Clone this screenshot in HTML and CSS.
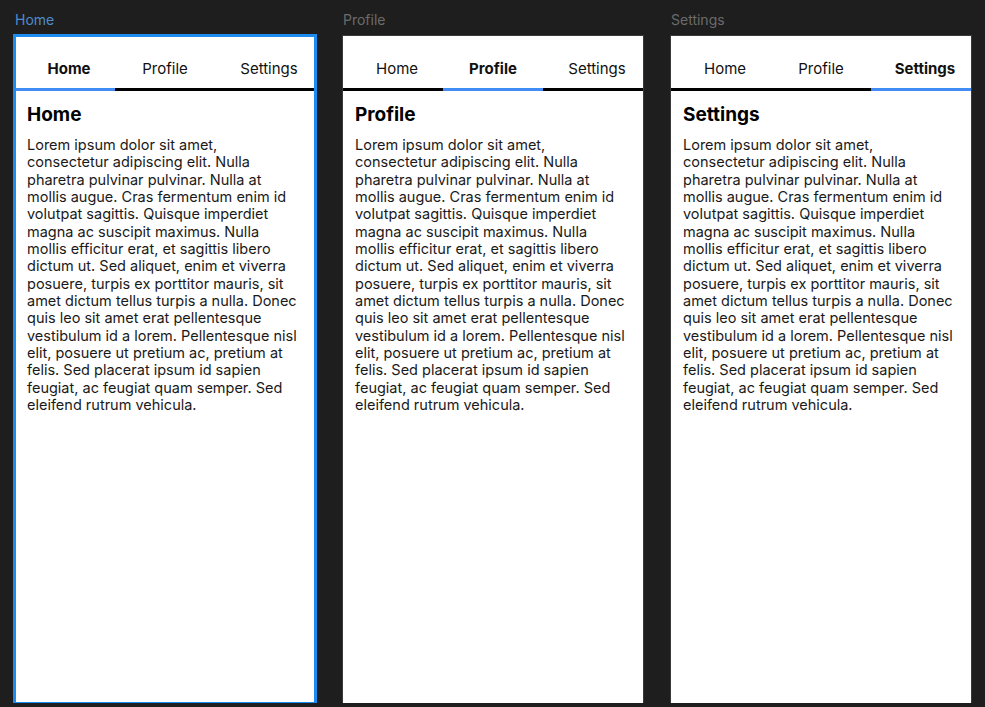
FILE: index.html
```html
<!DOCTYPE html>
<html>
<head>
    <title>Tabs</title>
    <link rel="stylesheet" href="styles.css">
</head>
<body>
    <div class="canvas">
        <div class="column">
            <div class="frame-label selected">Home</div>
            <div class="frame selected">
                <div class="tabs">
                    <div class="tab active">Home</div>
                    <div class="tab">Profile</div>
                    <div class="tab">Settings</div>
                </div>
                <div class="content">
                    <h2>Home</h2>
                    <p>Lorem ipsum dolor sit amet, consectetur adipiscing elit. Nulla pharetra pulvinar pulvinar. Nulla at mollis augue. Cras fermentum enim id volutpat sagittis. Quisque imperdiet magna ac suscipit maximus. Nulla mollis efficitur erat, et sagittis libero dictum ut. Sed aliquet, enim et viverra posuere, turpis ex porttitor mauris, sit amet dictum tellus turpis a nulla. Donec quis leo sit amet erat pellentesque vestibulum id a lorem. Pellentesque nisl elit, posuere ut pretium ac, pretium at felis. Sed placerat ipsum id sapien feugiat, ac feugiat quam semper. Sed eleifend rutrum vehicula.</p>
                </div>
            </div>
        </div>
        <div class="column">
            <div class="frame-label">Profile</div>
            <div class="frame">
                <div class="tabs">
                    <div class="tab">Home</div>
                    <div class="tab active">Profile</div>
                    <div class="tab">Settings</div>
                </div>
                <div class="content">
                    <h2>Profile</h2>
                    <p>Lorem ipsum dolor sit amet, consectetur adipiscing elit. Nulla pharetra pulvinar pulvinar. Nulla at mollis augue. Cras fermentum enim id volutpat sagittis. Quisque imperdiet magna ac suscipit maximus. Nulla mollis efficitur erat, et sagittis libero dictum ut. Sed aliquet, enim et viverra posuere, turpis ex porttitor mauris, sit amet dictum tellus turpis a nulla. Donec quis leo sit amet erat pellentesque vestibulum id a lorem. Pellentesque nisl elit, posuere ut pretium ac, pretium at felis. Sed placerat ipsum id sapien feugiat, ac feugiat quam semper. Sed eleifend rutrum vehicula.</p>
                </div>
            </div>
        </div>
        <div class="column">
            <div class="frame-label">Settings</div>
            <div class="frame">
                <div class="tabs">
                    <div class="tab">Home</div>
                    <div class="tab">Profile</div>
                    <div class="tab active">Settings</div>
                </div>
                <div class="content">
                    <h2>Settings</h2>
                    <p>Lorem ipsum dolor sit amet, consectetur adipiscing elit. Nulla pharetra pulvinar pulvinar. Nulla at mollis augue. Cras fermentum enim id volutpat sagittis. Quisque imperdiet magna ac suscipit maximus. Nulla mollis efficitur erat, et sagittis libero dictum ut. Sed aliquet, enim et viverra posuere, turpis ex porttitor mauris, sit amet dictum tellus turpis a nulla. Donec quis leo sit amet erat pellentesque vestibulum id a lorem. Pellentesque nisl elit, posuere ut pretium ac, pretium at felis. Sed placerat ipsum id sapien feugiat, ac feugiat quam semper. Sed eleifend rutrum vehicula.</p>
                </div>
            </div>
        </div>
    </div>
</body>
</html>
```

FILE: styles.css
```css
body {
    margin: 0;
    background-color: #1e1e1e;
    font-family: Inter, "Noto Sans", sans-serif;
}
.canvas {
    display: flex;
    gap: 28px;
    padding-left: 15px;
}
.column {
    width: 300px;
}
.frame-label {
    font-size: 14px;
    line-height: 16px;
    padding: 12px 0 8px;
    color: #6b6b6b;
}
.frame-label.selected {
    color: #4f8ccb;
}
.frame {
    height: 667px;
    background-color: #fff;
    box-shadow: 0 0 0 1px #3a3a3a;
}
.frame.selected {
    box-shadow: none;
    outline: 3px solid #1d8cf0; /* borde de seleccion */
    outline-offset: -1px;
}
.tabs {
    display: grid;
    grid-template-columns: repeat(3, 1fr);
}
.tab {
    text-align: center;
    font-size: 15px;
    line-height: 18px;
    padding: 24px 0 10px;
    color: #111;
    border-bottom: 3px solid #000;
}
.tab:first-child,
.tab:last-child {
    padding-left: 8px;
}
.tab.active {
    font-weight: 700;
    border-bottom-color: #418cf5;
}
.content {
    padding: 12px 14px 12px 12px;
}
.content h2 {
    margin: 0 0 10px;
    font-size: 19px;
    line-height: normal;
    font-weight: 700;
    color: #000;
}
.content p {
    margin: 0;
    font-size: 14.5px;
    line-height: 17.33px;
    color: #1a1a1a;
}
```
